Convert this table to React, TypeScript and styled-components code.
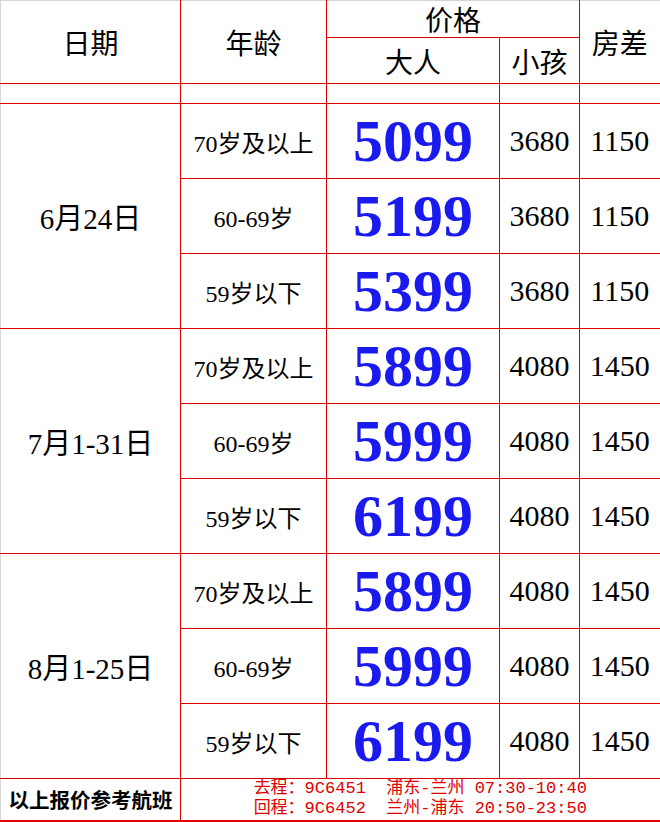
import styled, { createGlobalStyle } from 'styled-components'

const GlobalStyle = createGlobalStyle`
  html, body {
    margin: 0;
    padding: 0;
    background: #ffffff;
  }
`

const LINE = '#dd0000'
const SERIF = `"Liberation Serif", "Noto Sans CJK SC", serif`
const CJK = `"Noto Sans CJK SC", sans-serif`

const Sheet = styled.table`
  width: 660px;
  table-layout: fixed;
  border-collapse: collapse;
  border-top: 1px solid #d4d4d4;
  border-left: 1px solid #d4d4d4;
  border-right: 2px solid ${LINE};
  border-bottom: 2px solid ${LINE};
  color: #000;
`

const Row = styled.tr<{ $h: number }>`
  height: ${p => p.$h}px;
`

const HeadCell = styled.td<{ $noTop?: boolean }>`
  padding: 0;
  text-align: center;
  vertical-align: middle;
  font-family: ${CJK};
  font-size: 28px;
  line-height: 1;
  border: 1px solid ${LINE};
  ${p => p.$noTop && 'border-top-color: #d4d4d4;'}
  &:first-child { border-left-color: #d4d4d4; }
`

const Blank = styled.td`
  padding: 0;
  border: 1px solid ${LINE};
  &:first-child { border-left-color: #d4d4d4; }
`

const DateCell = styled.td`
  padding: 0;
  text-align: center;
  font-family: ${SERIF};
  font-size: 29px;
  border: 1px solid ${LINE};
  border-left-color: #d4d4d4;
`

const AgeCell = styled.td`
  padding: 0;
  text-align: center;
  font-family: ${SERIF};
  font-size: 24px;
  border: 1px solid ${LINE};
`

const AdultPrice = styled.td`
  padding: 0;
  text-align: center;
  font-family: ${SERIF};
  font-size: 60px;
  font-weight: 700;
  color: #1a1aee;
  line-height: 1;
  border: 1px solid ${LINE};
`

const PlainPrice = styled.td`
  padding: 0;
  text-align: center;
  font-family: ${SERIF};
  font-size: 30px;
  border: 1px solid ${LINE};
`

const NoteCell = styled.td`
  padding: 0;
  text-align: center;
  font-family: ${CJK};
  font-size: 20.5px;
  font-weight: 700;
  border: 1px solid ${LINE};
  border-left-color: #d4d4d4;
`

const FlightCell = styled.td`
  padding: 0;
  text-align: center;
  border: 1px solid ${LINE};
`

const FlightLines = styled.div`
  display: inline-flex;
  flex-direction: column;
  align-items: flex-start;
  font-family: "Liberation Mono", "Noto Sans CJK SC", monospace;
  font-size: 17px;
  line-height: 20px;
  color: #e00000;
  white-space: pre;
`

type Tier = { age: string; adult: string; child: string; room: string }
type Period = { date: string; tiers: Tier[] }

const periods: Period[] = [
  {
    date: '6月24日',
    tiers: [
      { age: '70岁及以上', adult: '5099', child: '3680', room: '1150' },
      { age: '60-69岁', adult: '5199', child: '3680', room: '1150' },
      { age: '59岁以下', adult: '5399', child: '3680', room: '1150' },
    ],
  },
  {
    date: '7月1-31日',
    tiers: [
      { age: '70岁及以上', adult: '5899', child: '4080', room: '1450' },
      { age: '60-69岁', adult: '5999', child: '4080', room: '1450' },
      { age: '59岁以下', adult: '6199', child: '4080', room: '1450' },
    ],
  },
  {
    date: '8月1-25日',
    tiers: [
      { age: '70岁及以上', adult: '5899', child: '4080', room: '1450' },
      { age: '60-69岁', adult: '5999', child: '4080', room: '1450' },
      { age: '59岁以下', adult: '6199', child: '4080', room: '1450' },
    ],
  },
]

function App() {
  return (
    <>
      <GlobalStyle />
      <Sheet>
        <colgroup>
          <col style={{ width: 180 }} />
          <col style={{ width: 146 }} />
          <col style={{ width: 173 }} />
          <col style={{ width: 80 }} />
          <col style={{ width: 81 }} />
        </colgroup>
        <tbody>
          <Row $h={37}>
            <HeadCell rowSpan={2} $noTop>日期</HeadCell>
            <HeadCell rowSpan={2} $noTop>年龄</HeadCell>
            <HeadCell colSpan={2} $noTop>价格</HeadCell>
            <HeadCell rowSpan={2} $noTop>房差</HeadCell>
          </Row>
          <Row $h={46}>
            <HeadCell>大人</HeadCell>
            <HeadCell>小孩</HeadCell>
          </Row>
          <Row $h={20}>
            <Blank />
            <Blank />
            <Blank />
            <Blank />
            <Blank />
          </Row>
          {periods.map(period =>
            period.tiers.map((tier, i) => (
              <Row $h={75} key={period.date + tier.age}>
                {i === 0 && <DateCell rowSpan={3}>{period.date}</DateCell>}
                <AgeCell>{tier.age}</AgeCell>
                <AdultPrice>{tier.adult}</AdultPrice>
                <PlainPrice>{tier.child}</PlainPrice>
                <PlainPrice>{tier.room}</PlainPrice>
              </Row>
            ))
          )}
          <Row $h={42}>
            <NoteCell>以上报价参考航班</NoteCell>
            <FlightCell colSpan={4}>
              <FlightLines>
                <span>{'去程：9C6451  浦东-兰州 07:30-10:40'}</span>
                <span>{'回程：9C6452  兰州-浦东 20:50-23:50'}</span>
              </FlightLines>
            </FlightCell>
          </Row>
        </tbody>
      </Sheet>
    </>
  )
}

export default App
